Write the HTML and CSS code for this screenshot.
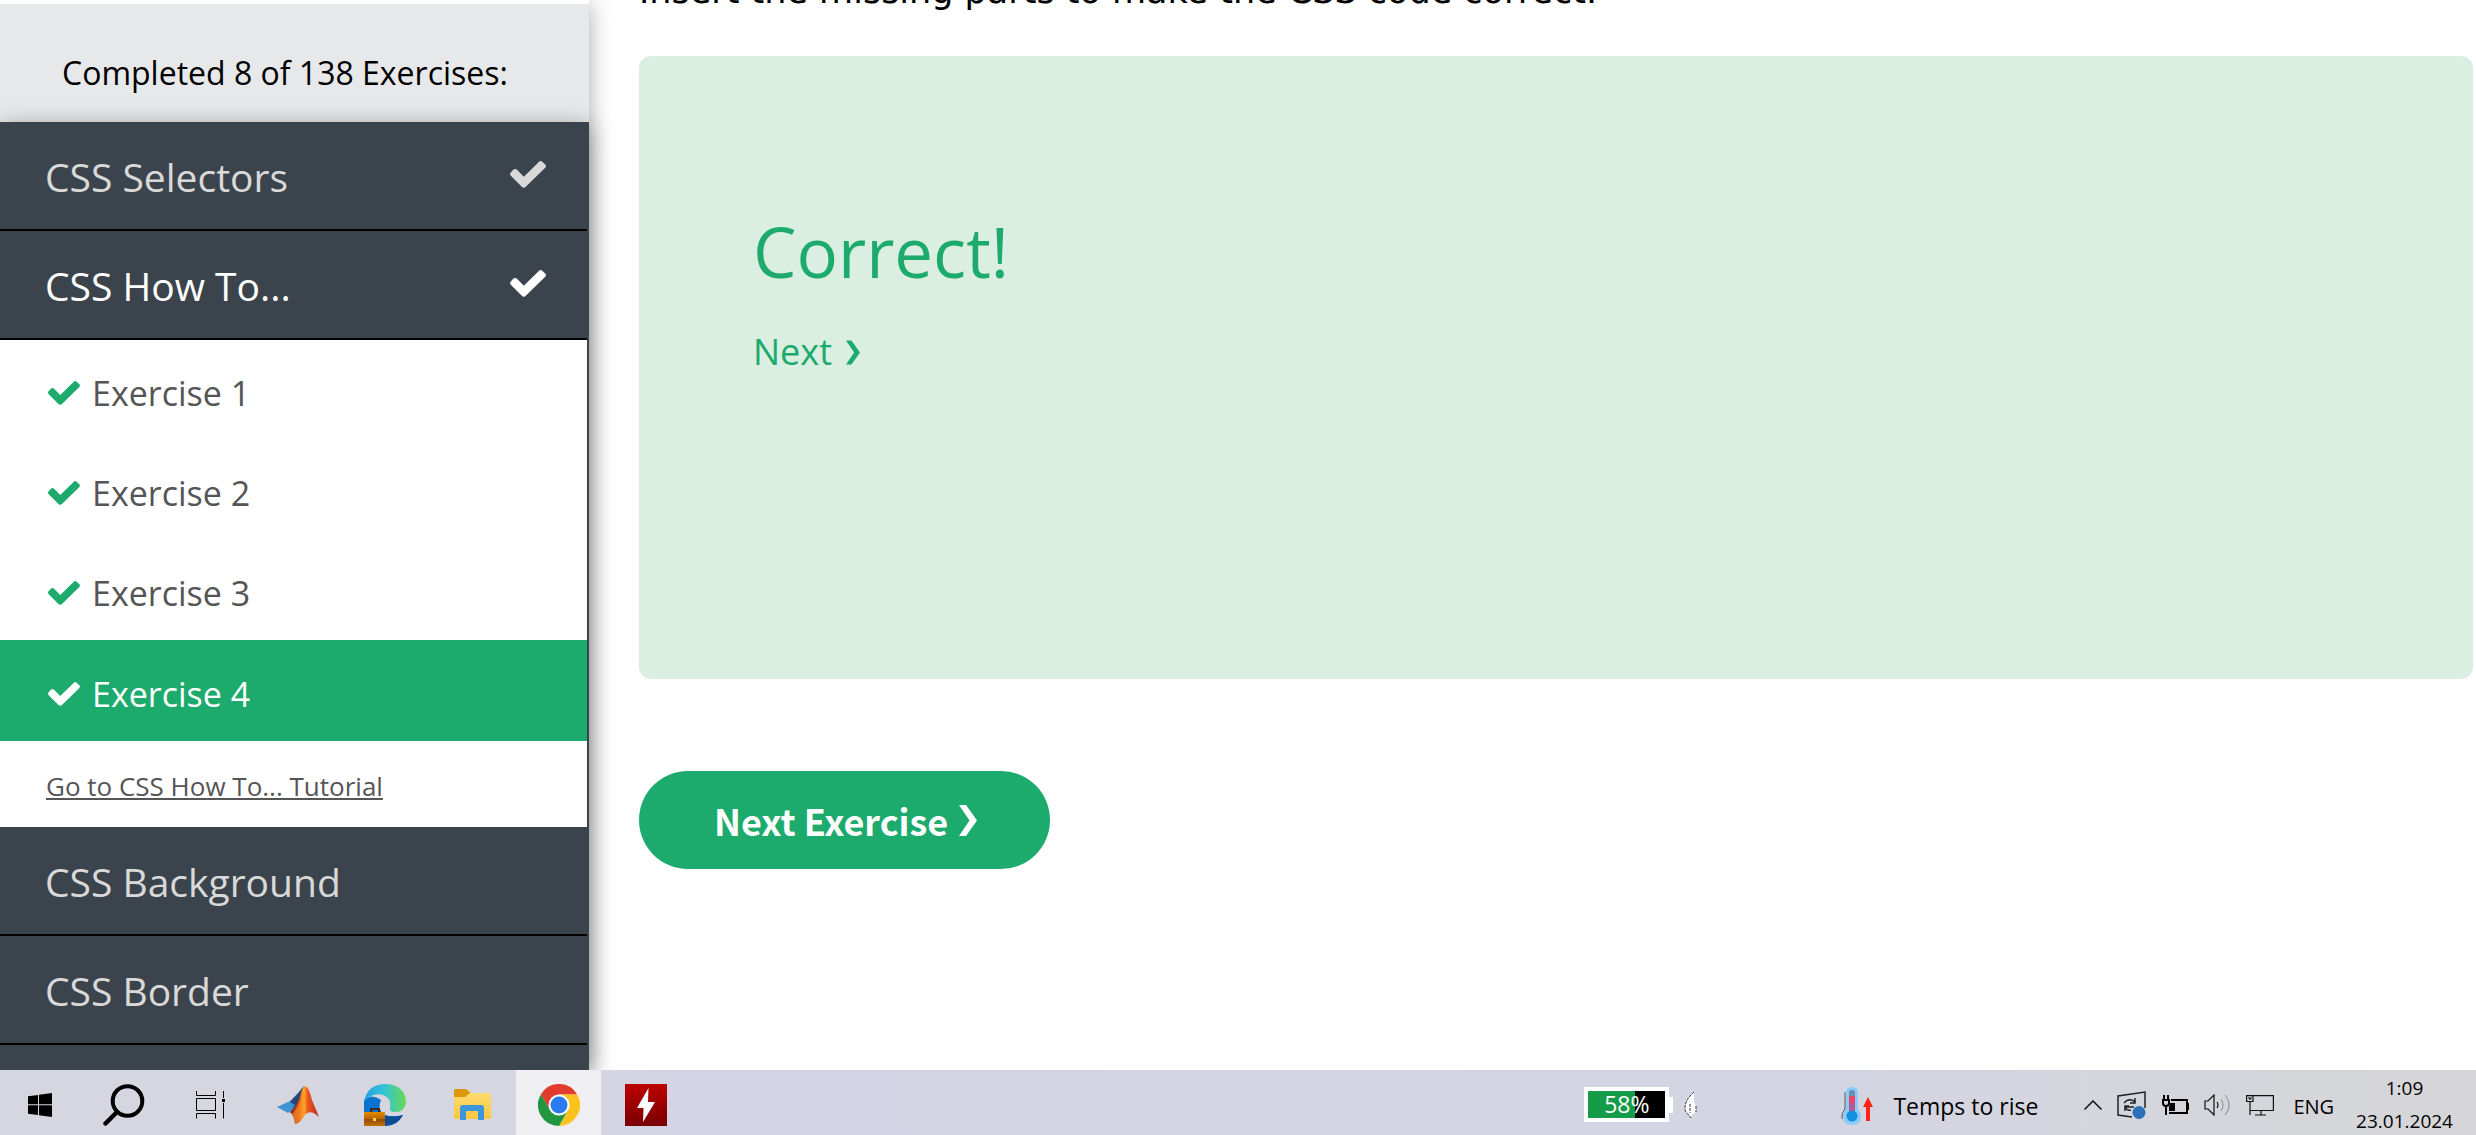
FILE: index.html
```html
<!DOCTYPE html>
<html lang="en">
<head>
<meta charset="utf-8">
<title>CSS Exercises</title>
<link rel="stylesheet" href="styles.css">
</head>
<body>
<svg class="defs" aria-hidden="true">
  <symbol id="check" viewBox="0 0 36 27"><path d="M6.800 8.600Q5 7.200 3.200 8.800L1 11.200Q-.8 13 .8 14.800L11.500 25.500Q13.800 28 16 25.500L35 7Q36.800 5.300 35.200 3.600L32.500 1Q30.600 -.8 28.800 1L13.800 15.800Z"/></symbol>
  <symbol id="arrow" viewBox="0 0 18 31"><path d="M0 0H7L18 15.500 7 31H0L10.500 15.500Z"/></symbol>
</svg>
<div class="screen">
  <div class="page">
    <aside class="sidebar">
      <p class="progress">Completed 8 of 138 Exercises:</p>
      <nav class="menu">
        <a class="topic" href="#">CSS Selectors <svg class="tick"><use href="#check"/></svg></a>
        <a class="topic open" href="#">CSS How To... <svg class="tick"><use href="#check"/></svg></a>
        <div class="exercises">
          <a class="exercise" href="#"><svg class="done"><use href="#check"/></svg>Exercise 1</a>
          <a class="exercise" href="#"><svg class="done"><use href="#check"/></svg>Exercise 2</a>
          <a class="exercise" href="#"><svg class="done"><use href="#check"/></svg>Exercise 3</a>
          <a class="exercise current" href="#"><svg class="done"><use href="#check"/></svg>Exercise 4</a>
          <a class="tutorial" href="#">Go to CSS How To... Tutorial</a>
        </div>
        <a class="topic" href="#">CSS Background</a>
        <a class="topic" href="#">CSS Border</a>
      </nav>
    </aside>
    <main class="main">
      <p class="task">Insert the missing parts to make the CSS code correct.</p>
      <section class="result">
        <h1>Correct!</h1>
        <a class="next" href="#">Next <svg width="14" height="25"><use href="#arrow"/></svg></a>
      </section>
      <button class="next-exercise" type="button">Next Exercise <svg width="18" height="31"><use href="#arrow"/></svg></button>
    </main>
  </div>

  <footer class="taskbar">
    <div class="apps">
      <button class="app start" type="button" aria-label="Start"><svg width="24" height="24" viewBox="0 0 24 24"><path d="M0 3.300L10 2V11.300H0ZM11 1.800L24 0V11.300H11ZM0 12.300H10V22L0 20.700ZM11 12.300H24V24L11 22.200Z"/></svg></button>
      <button class="app" type="button" aria-label="Search"><svg width="42" height="42" viewBox="0 0 42 42" fill="none" stroke="#000"><circle cx="24.500" cy="17" r="14.800" stroke-width="4"/><path d="M14 28L2.500 39.500" stroke-width="4.500" stroke-linecap="round"/></svg></button>
      <button class="app" type="button" aria-label="Task view"><svg width="30" height="28" viewBox="0 0 30 28" fill="none" stroke="#000"><path d="M.5 0V4.500H19.500V0M.5 27.500V22.500H19.500V27.500M.5 7.500H19.500V19.500H.5ZM27.500 0V7M27.500 12V27.500"/><path d="M26 8h3v3h-3z" fill="#000" stroke="none"/></svg></button>
      <button class="app" type="button" aria-label="MATLAB"><svg width="42" height="40" viewBox="0 0 42 40"><defs><linearGradient id="mat"><stop offset="0" stop-color="#7d1d18"/><stop offset=".3" stop-color="#d9401a"/><stop offset=".48" stop-color="#ffae28"/><stop offset=".6" stop-color="#ef5a22"/><stop offset="1" stop-color="#b52b18"/></linearGradient></defs><path d="M0 22L13 16Q18 11 22 7L27 1 21 20 14 26 11 28Z" fill="#3f93d2"/><path d="M13 17Q20 10 27 1L22 19 14 26 18 20Z" fill="#284575"/><path d="M28 1Q32 2 35 15L42 32Q33 23 27 31 23 38 18 39 17 30 13 27 21 21 24 8 26 1 28 1Z" fill="url(#mat)"/><path d="M28 2Q27 14 29 26 23 38 18 39 17 32 15 29 24 19 28 2Z" fill="#ff9b24" opacity=".6"/></svg></button>
      <button class="app" type="button" aria-label="Edge"><svg width="42" height="42" viewBox="0 0 42 42"><defs><linearGradient id="edgeTop"><stop offset="0" stop-color="#249fe8"/><stop offset=".5" stop-color="#35c4d3"/><stop offset="1" stop-color="#65db50"/></linearGradient><linearGradient id="case" x2="0" y2="1"><stop offset="0" stop-color="#e58b04"/><stop offset=".5" stop-color="#ba6302"/><stop offset=".5" stop-color="#8f4800"/><stop offset="1" stop-color="#c27309"/></linearGradient></defs><path d="M0 16Q8 9 17 16 13 25 19 30 27 34 39 31 33 42 21 42 5 42 0 27Z" fill="#0b73cf"/><path d="M16 19Q14 27 20 31 28 34 39 31 33 42 21 42 13 35 16 19Z" fill="#0d4b97"/><path d="M0 18Q3 0 22 0 41 1 42 18 41 28 31 28 25 28 26 24 28 14 19 11 8 8 0 18Z" fill="url(#edgeTop)"/><path d="M7 28V25h8v3" fill="none" stroke="#3c2b22" stroke-width="2"/><path d="M0 28h21v14H0z" fill="url(#case)"/><path d="M9 34h3v3H9z" fill="#ffd62a"/></svg></button>
      <button class="app" type="button" aria-label="File Explorer"><svg width="38" height="32" viewBox="0 0 38 32"><defs><linearGradient id="folder" x2="0" y2="1"><stop offset="0" stop-color="#ffdc70"/><stop offset="1" stop-color="#f9c63f"/></linearGradient></defs><path d="M1 1Q1 0 3 0H13L18 4 14 8H1Z" fill="#dc9905"/><path d="M1 8H12L17 4H36Q38 4 38 6V28Q38 30 36 30H3Q1 30 1 28Z" fill="url(#folder)"/><path d="M7 31V19Q7 16 10 16H28Q31 16 31 19V31H25V22H13V31Z" fill="#3a95dc"/></svg></button>
      <button class="app active" type="button" aria-label="Chrome"><svg width="42" height="42" viewBox="0 0 42 42"><path d="M2.800 10.500A21 21 0 0 1 39.200 10.500H21L12 26Z" fill="#e33b2e"/><path d="M39.200 10.500A21 21 0 0 1 21 42L30 26 21 10.500Z" fill="#fcc31e"/><path d="M2.800 10.500A21 21 0 0 0 21 42L30 26H12Z" fill="#21953f"/><circle cx="21" cy="21" r="10.500" fill="#fff"/><circle cx="21" cy="21" r="8.500" fill="#2b7af0"/></svg></button>
      <button class="app" type="button" aria-label="Flash"><svg width="42" height="42" viewBox="0 0 42 42"><defs><linearGradient id="red" x2="0" y2="1"><stop offset="0" stop-color="#bd0000"/><stop offset="1" stop-color="#790000"/></linearGradient></defs><path d="M0 0h42v42H0z" fill="url(#red)"/><path d="M23.500 4L12 24H18.500L18 38 30 18H23Z" fill="#fff"/></svg></button>
    </div>

    <div class="battery">
      <span class="level">58%</span>
      <svg class="tip" width="4" height="16"><path d="M0 0h4v16H0z" fill="#fff"/></svg>
      <svg class="leaf" width="14" height="28" viewBox="0 0 14 28"><path d="M10 1Q1 9 1 17 1 21 4 23L7 27 8 23 12 21 12 15 10 11Z" fill="#fff"/><path d="M10 1Q1 9 1 17 1 21 4 23L7 27M6 13V22M12 15V21" fill="none" stroke="#333" stroke-dasharray="3 1"/></svg>
    </div>

    <button class="weather" type="button">
      <svg width="32" height="40" viewBox="0 0 32 40"><path d="M5 7Q5 1 11 1T17 7V23Q20 26 20 30 20 39 11 39T2 30Q2 26 5 23Z" fill="#8bcbfb"/><path d="M4 6V23Q0 27 1 33" fill="none" stroke="#555" stroke-width="1"/><path d="M8 7Q8 4 11 4T14 7V12H8Z" fill="#6b8fae"/><path d="M8 10h6v16H8z" fill="#b45a92"/><path d="M8 10h6v7H8z" fill="#ed4469"/><circle cx="11" cy="30" r="5.500" fill="#158fe0"/><path d="M27 11L32 21H29V35H25V21H22Z" fill="#ff2512"/></svg>
      Temps to rise
    </button>

    <div class="tray">
      <svg width="18" height="10" viewBox="0 0 18 10" fill="none" stroke="#111" stroke-width="1.500"><path d="M.5 9.500L9 1 17.500 9.500"/></svg>
      <svg width="29" height="28" viewBox="0 0 29 28" fill="none" stroke="#222" stroke-width="1.500"><path d="M15 26L1 24V5L28 1V17"/><path d="M7 12Q12 6 18 11M18 7V12H13M17 16H8M8 20V15H12M8 16Q10 20 14 19"/><circle cx="22" cy="21.500" r="6.500" fill="#2b70bb" stroke="none"/></svg>
      <svg width="28" height="21" viewBox="0 0 28 21" fill="none" stroke="#000" stroke-width="2"><path d="M2 5V8Q2 11 5 11T8 8V5ZM3 0V5M7 0V5M5 11V20M10 5H26V18H8M27 8V15"/><path d="M9 8h5v8H8v-4z" fill="#000" stroke="none"/></svg>
      <svg width="27" height="22" viewBox="0 0 27 22" fill="none" stroke="#111" stroke-width="1.200"><path d="M1 7H4L10 1V21L4 15H1ZM13 8Q15 11 13 14"/><path d="M17 5Q21 11 17 17M21 1Q29 11 21 21" stroke="#999"/></svg>
      <svg width="28" height="21" viewBox="0 0 28 21" fill="none" stroke="#111" stroke-width="1.200"><path d="M7 .6H27.400V15.500H4M15 15.500V20M9 20H20M.6 .6H7V6.500H.6ZM4 6.500V20M2 3H6M4 3V5"/></svg>
    </div>
    <span class="language">ENG</span>
    <div class="clock"><time>1:09</time><time datetime="2024-01-23">23.01.2024</time></div>
  </footer>
</div>
</body>
</html>
```
FILE: styles.css
```css
* { box-sizing: border-box; }

body {
  margin: 0;
  font-family: "Open Sans", "Noto Sans", sans-serif;
  color: #000;
  background: #fff;
}

button {
  border: 0;
  background: none;
  font: inherit;
  color: inherit;
}

.defs { position: absolute; width: 0; height: 0; }

.screen {
  display: flex;
  flex-direction: column;
  height: 100vh;
}

.page {
  display: flex;
  flex: 1;
  min-height: 0;
  overflow: hidden;
}

/* Sidebar */
.sidebar {
  display: flex;
  flex-direction: column;
  flex: none;
  width: 589px;
  padding-top: 4px;
  box-shadow: 0 4px 22px rgba(0, 0, 0, .35);
}

.progress {
  margin: 0;
  padding: 46px 62px 26px;
  font-size: 32px;
  line-height: 46px;
  white-space: nowrap;
  background: #e7e8ea;
}

.menu {
  flex: 1;
  padding-right: 2px;
  background: #3b444c;
  box-shadow: 0 4px 22px rgba(0, 0, 0, .35);
}

.topic {
  display: flex;
  align-items: center;
  justify-content: space-between;
  height: 109px;
  padding: 2px 41px 0 45px;
  border-bottom: 2px solid #000;
  font-size: 39px;
  color: #d9d9d9;
  text-decoration: none;
}

.topic.open { color: #fff; }

.tick { width: 36px; height: 27px; margin-bottom: 4px; fill: currentColor; }

.exercises { background: #fff; }

.exercise {
  display: flex;
  align-items: center;
  gap: 12px;
  height: 100px;
  padding: 6px 48px 0;
  font-size: 34px;
  color: #555;
  text-decoration: none;
}

.done { width: 32px; height: 24px; fill: #1caa6d; }

.exercise.current { height: 101px; color: #fff; background: #1caa6d; }
.exercise.current .done { fill: #fff; }

.tutorial {
  display: block;
  padding: 25px 46px 21px;
  font-size: 26px;
  line-height: 40px;
  color: #555;
}

/* Exercise */
.main {
  flex: 1;
  min-width: 0;
  padding: 0 3px 0 50px;
}

.task {
  margin: -29px 0 45px;
  font-family: "DejaVu Sans", sans-serif;
  font-size: 35px;
  line-height: 40px;
}

.result {
  height: 623px;
  padding: 142px 114px;
  border-radius: 12px;
  color: #1caa6d;
  background: #daeee1;
}

.result h1 {
  margin: 0;
  font-size: 69px;
  font-weight: 400;
  line-height: 106px;
}

.next {
  display: flex;
  align-items: center;
  gap: 14px;
  width: max-content;
  margin-top: 22px;
  font-size: 36px;
  line-height: 52px;
  color: inherit;
  fill: currentColor;
  text-decoration: none;
}

.next-exercise {
  display: flex;
  align-items: center;
  gap: 11px;
  height: 98px;
  margin-top: 92px;
  padding: 0 73px 0 75px;
  border-radius: 49px;
  font-family: "Noto Sans CJK SC", sans-serif;
  font-size: 36px;
  font-weight: 700;
  color: #fff;
  fill: currentColor;
  background: #1caa6d;
}

/* Taskbar */
.taskbar {
  display: flex;
  align-items: center;
  flex: none;
  height: 65px;
  padding-right: 23px;
  background: linear-gradient(90deg, #d5d6df 0, #d5d6df 22%, #d4d4e6 28%, #d4d5e2 75%, #d5d6db 90%, #d6d6d8);
}

.apps { display: flex; gap: 2px; align-self: stretch; }

.app {
  display: flex;
  align-items: center;
  justify-content: center;
  width: 85px;
  padding: 5px 0 0;
}

.app.start { width: 79px; }
.app.active { background: #eeeef3; }

.battery {
  display: flex;
  align-items: center;
  margin-left: auto;
  padding-top: 4px;
}

.level {
  width: 85px;
  border: 4px solid #fff;
  font-size: 23px;
  line-height: 27px;
  text-align: center;
  color: #fff;
  background: linear-gradient(90deg, #169b48 61%, #000 61%);
}

.leaf { margin-left: 11px; }

.weather {
  display: flex;
  align-items: center;
  gap: 20px;
  margin-left: 143px;
  padding: 6px 0 0;
  font-size: 23px;
}

.tray {
  display: flex;
  align-items: center;
  gap: 15px;
  margin-left: 46px;
  padding-top: 5px;
}

.language { margin-left: 19px; padding-top: 7px; font-size: 20px; }

.clock {
  display: flex;
  flex-direction: column;
  align-items: center;
  margin-left: 22px;
  font-size: 19px;
  line-height: 33px;
  padding-top: 5px;
}
```
